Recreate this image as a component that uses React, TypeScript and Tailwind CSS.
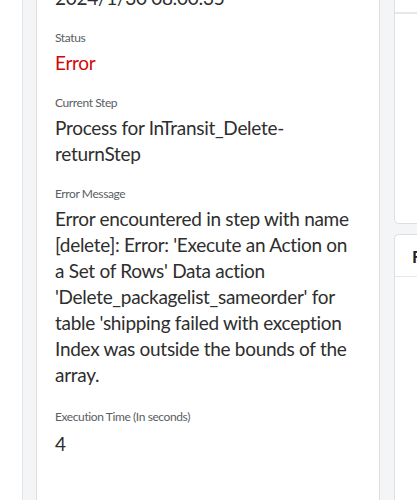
import React from "react";

const font = { fontFamily: "Lato, 'Open Sans', sans-serif" };

function Field({ label, children, valueClass, className }: { label: string; children: React.ReactNode; valueClass?: string; className?: string }) {
  return (
    <div className={"flex flex-col gap-1 " + (className ?? "")}>
      <div className="text-[12px] leading-4 tracking-[-0.4px] text-[#5a5e63]">{label}</div>
      <div className={"text-[19px] leading-[26px] tracking-[-0.3px] " + (valueClass ?? "text-[#2e2e2e]")}>{children}</div>
    </div>
  );
}

export default function App() {
  return (
    <div className="h-[500px] w-[417px] overflow-hidden bg-white flex" style={font}>
      <div className="w-[22px] shrink-0 bg-white" />
      <div className="flex-1 flex border-l border-[#e3e4e6] bg-[#f4f5f7] pl-[13px] pr-[14px] gap-[14px]">
        <div className="w-[344px] shrink-0 bg-white border-x border-[#dedfe1] h-[520px] pl-[18px] pr-[26px]">
          <div className="-mt-[15px] flex flex-col gap-[19px]">
            <div className="text-[19px] leading-[26px] tracking-[-0.3px] text-[#2e2e2e]">2024/1/30 08:00:35</div>
            <Field label="Status" valueClass="text-[#cf0a0a]">Error</Field>
            <Field label="Current Step">Process for InTransit_Delete-returnStep</Field>
            <Field label="Error Message">
              Error encountered in step with name [delete]: Error: 'Execute an Action on a Set of Rows' Data action 'Delete_packagelist_sameorder' for table 'shipping failed with exception Index was outside the bounds of the array.
            </Field>
            <Field label="Execution Time (In seconds)" className="mt-[2px] gap-[6px]">4</Field>
          </div>
        </div>
        <div className="flex-1 flex flex-col gap-[10px] -mr-[14px] overflow-hidden">
          <div className="h-[224px] bg-white border-l border-b border-[#dedfe1] rounded-bl-[5px]">
            <div className="h-[14px] border-b-2 border-[#e6e7e9]" />
          </div>
          <div className="flex-1 bg-white border-l border-t border-[#dedfe1] rounded-tl-[5px]">
            <div className="h-[42px] border-b border-[#e6e7e9] pl-[17px] pt-[12px] text-[17px] font-bold leading-5 text-[#222] whitespace-nowrap">
              Failed Steps
            </div>
          </div>
        </div>
      </div>
    </div>
  );
}
